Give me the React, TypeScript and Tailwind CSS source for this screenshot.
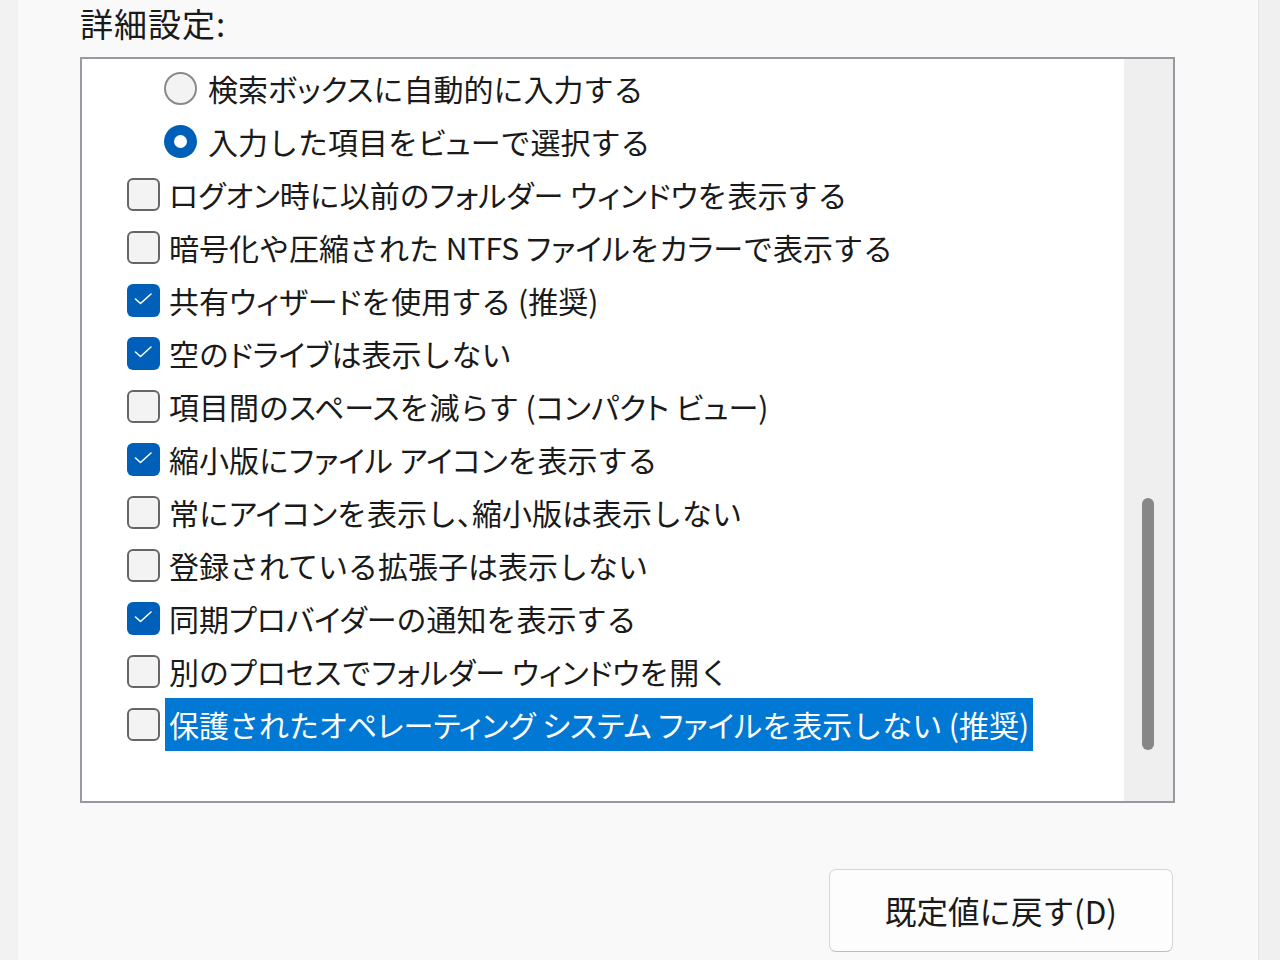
import React from 'react';

type Item = { label: string; kind: 'radio' | 'check'; on: boolean; selected?: boolean };

const items: Item[] = [
    { label: '検索ボックスに自動的に入力する', kind: 'radio', on: false },
    { label: '入力した項目をビューで選択する', kind: 'radio', on: true },
    { label: 'ログオン時に以前のフォルダー ウィンドウを表示する', kind: 'check', on: false },
    { label: '暗号化や圧縮された NTFS ファイルをカラーで表示する', kind: 'check', on: false },
    { label: '共有ウィザードを使用する (推奨)', kind: 'check', on: true },
    { label: '空のドライブは表示しない', kind: 'check', on: true },
    { label: '項目間のスペースを減らす (コンパクト ビュー)', kind: 'check', on: false },
    { label: '縮小版にファイル アイコンを表示する', kind: 'check', on: true },
    { label: '常にアイコンを表示し、縮小版は表示しない', kind: 'check', on: false },
    { label: '登録されている拡張子は表示しない', kind: 'check', on: false },
    { label: '同期プロバイダーの通知を表示する', kind: 'check', on: true },
    { label: '別のプロセスでフォルダー ウィンドウを開く', kind: 'check', on: false },
    { label: '保護されたオペレーティング システム ファイルを表示しない (推奨)', kind: 'check', on: false, selected: true },
];

// katakana runs are set proportionally, kanji / hiragana stay full width
const JpText: React.FC<{ text: string }> = ({ text }) => (
    <span className="whitespace-pre">
        {text.split(/([\u30A0-\u30FF、]+)/).map((part, i) =>
            /^[\u30A0-\u30FF、]+$/.test(part) ? (
                <span key={i} className="[font-feature-settings:'palt']">{part}</span>
            ) : (
                <span key={i}>{part}</span>
            )
        )}
    </span>
);

const Radio: React.FC<{ on: boolean }> = ({ on }) =>
    on ? (
        <span className="w-[33px] h-[33px] rounded-full bg-[#005fb8] flex items-center justify-center shrink-0">
            <span className="w-[13px] h-[13px] rounded-full bg-white" />
        </span>
    ) : (
        <span className="w-[33px] h-[33px] rounded-full border-2 border-[#8a8a8a] bg-[#f3f3f3] shrink-0" />
    );

const Check: React.FC<{ on: boolean }> = ({ on }) =>
    on ? (
        <span className="w-[33px] h-[33px] rounded-[6px] bg-[#005fb8] flex items-center justify-center shrink-0">
            <svg width="33" height="33" viewBox="0 0 33 33" fill="none">
                <path d="M8.5 15 L13.5 19.5 L24 10" stroke="white" strokeWidth="1.6" strokeLinecap="round" strokeLinejoin="round" />
            </svg>
        </span>
    ) : (
        <span className="w-[33px] h-[33px] rounded-[6px] border-2 border-[#666666] bg-[#f3f3f3] shrink-0" />
    );

const Row: React.FC<{ item: Item }> = ({ item }) => (
    <div className={`h-[53px] flex items-center ${item.kind === 'radio' ? 'pl-[82px] gap-[7px]' : 'pl-[45px] gap-[5px]'}`}>
        {item.kind === 'radio' ? <Radio on={item.on} /> : <Check on={item.on} />}
        <span
            className={`h-[53px] flex items-center px-[4px] whitespace-nowrap ${
                item.selected ? 'bg-[#0078d4] text-white' : 'text-[#1a1a1a]'
            }`}
        >
            <JpText text={item.label} />
        </span>
    </div>
);

export default function App() {
    return (
        <div className="w-[1280px] h-[960px] flex overflow-hidden font-['Noto_Sans_CJK_JP','Noto_Sans',sans-serif] text-[30px]">
            <div className="w-[18px] bg-[#f2f2f2]" />
            <div className="flex-1 bg-[#f9f9f9] pl-[62px]">
                <div className="h-[44px] pt-[3px] leading-[40px] text-[33px] tracking-[1px] text-[#1a1a1a]">詳細設定:</div>
                <div className="mt-[13px] w-[1095px] h-[746px] border-2 border-[#979aa1] bg-white flex">
                    <div className="flex-1 pt-[3px] overflow-hidden">
                        {items.map((it, i) => (
                            <Row key={i} item={it} />
                        ))}
                    </div>
                    <div className="w-[49px] bg-[#efefef] flex flex-col items-start pl-[18px]">
                        <div className="mt-[439px] w-[12px] h-[252px] rounded-full bg-[#878787]" />
                    </div>
                </div>
                <div className="w-[1095px] flex justify-end pr-[2px] mt-[66px]">
                    <button className="w-[344px] h-[83px] rounded-[7px] bg-[#fdfdfd] border border-[#d6d6d6] border-b-[#bdbdbd] text-[#1a1a1a] text-[31.5px] flex items-center justify-center">
                        既定値に戻す(D)
                    </button>
                </div>
            </div>
            <div className="w-[22px] bg-[#f0f0f0] border-l border-[#e3e3e3]" />
        </div>
    );
}
